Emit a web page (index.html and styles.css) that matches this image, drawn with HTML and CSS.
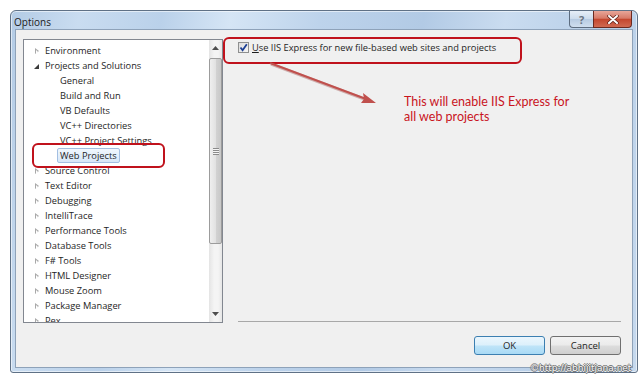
FILE: index.html
```html
<!DOCTYPE html>
<html lang="en">
<head>
    <meta charset="UTF-8">
    <meta name="viewport" content="width=device-width, initial-scale=1.0">
    <title>Options</title>
    <link rel="stylesheet" href="styles.css">
</head>
<body>
    <div class="window">
        <div class="titlebar">
            <span class="title">Options</span>
            <div class="caption-buttons">
                <span class="cap-btn help">?</span>
                <span class="cap-btn close">
                    <svg width="12" height="9" viewBox="0 0 12 9"><path d="M2 1 L10 8 M10 1 L2 8" stroke="#5a1c14" stroke-width="3.4" stroke-linecap="round"/><path d="M2 1 L10 8 M10 1 L2 8" stroke="#fff" stroke-width="2" stroke-linecap="round"/></svg>
                </span>
            </div>
        </div>

        <div class="client">
            <div class="main">
                <div class="tree">
                    <ul class="tree-list">
                        <li class="node"><span class="exp"></span><span class="label">Environment</span></li>
                        <li class="node"><span class="exp open"></span><span class="label">Projects and Solutions</span></li>
                        <li class="node child"><span class="label">General</span></li>
                        <li class="node child"><span class="label">Build and Run</span></li>
                        <li class="node child"><span class="label">VB Defaults</span></li>
                        <li class="node child"><span class="label">VC++ Directories</span></li>
                        <li class="node child"><span class="label">VC++ Project Settings</span></li>
                        <li class="node child"><span class="label selected">Web Projects</span></li>
                        <li class="node"><span class="exp"></span><span class="label">Source Control</span></li>
                        <li class="node"><span class="exp"></span><span class="label">Text Editor</span></li>
                        <li class="node"><span class="exp"></span><span class="label">Debugging</span></li>
                        <li class="node"><span class="exp"></span><span class="label">IntelliTrace</span></li>
                        <li class="node"><span class="exp"></span><span class="label">Performance Tools</span></li>
                        <li class="node"><span class="exp"></span><span class="label">Database Tools</span></li>
                        <li class="node"><span class="exp"></span><span class="label">F# Tools</span></li>
                        <li class="node"><span class="exp"></span><span class="label">HTML Designer</span></li>
                        <li class="node"><span class="exp"></span><span class="label">Mouse Zoom</span></li>
                        <li class="node"><span class="exp"></span><span class="label">Package Manager</span></li>
                        <li class="node"><span class="exp"></span><span class="label">Pex</span></li>
                    </ul>
                    <div class="scrollbar">
                        <div class="sb-arrow"><svg width="7" height="4" viewBox="0 0 7 4"><path d="M0 4 L3.5 0 L7 4 Z" fill="#4d4d4d"/></svg></div>
                        <div class="sb-thumb"><span class="grip"></span></div>
                        <div class="sb-track"></div>
                        <div class="sb-arrow"><svg width="7" height="4" viewBox="0 0 7 4"><path d="M0 0 L7 0 L3.5 4 Z" fill="#4d4d4d"/></svg></div>
                    </div>
                </div>

                <div class="panel">
                    <label class="check-row">
                        <span class="checkbox">
                            <svg width="9" height="9" viewBox="0 0 9 9"><path d="M1.5 4.5 L3.6 7.2 L7.8 1.2" fill="none" stroke="#1c3f94" stroke-width="1.8"/></svg>
                        </span>
                        <span><u>U</u>se IIS Express for new file-based web sites and projects</span>
                    </label>
                    <div class="separator"></div>
                </div>
            </div>

            <div class="buttons">
                <button class="btn default">OK</button>
                <button class="btn">Cancel</button>
            </div>
        </div>
    </div>

    <!-- annotations drawn over the screenshot -->
    <div class="callout callout-tree"></div>
    <div class="callout callout-check"></div>
    <svg class="arrow" width="640" height="377" viewBox="0 0 640 377">
        <path d="M270 63 L366 99" stroke="#8f3330" stroke-opacity=".35" stroke-width="3" transform="translate(1 1)"/>
        <path d="M270 63 L366 99" stroke="#c0504d" stroke-width="2"/>
        <path d="M376 103 L361 103 L364 99 L363 93 Z" fill="#c0504d"/>
    </svg>
    <p class="note">This will enable IIS Express for<br>all web projects</p>
    <div class="watermark">©http://abhijitjana.net</div>
</body>
</html>
```

FILE: styles.css
```css
html, body {
    margin: 0;
    padding: 0;
}
body {
    width: 640px;
    height: 377px;
    background: #fff;
    font-family: "Segoe UI", "Open Sans", sans-serif;
    font-size: 9.3px;
    color: #1e1e1e;
    position: relative;
    overflow: hidden;
}

/* window frame */
.window {
    margin: 10px 0 0 10px;
    width: 626px;
    height: 361px;
    border: 1px solid #5f7186;
    border-radius: 6px 6px 3px 3px;
    background: linear-gradient(100deg, #b3cbe5 0%, #c9dcf0 10%, #bad1ea 22%, #d5e5f5 32%, #bdd3eb 45%, #b2cae5 60%, #cadcf0 72%, #b8cfe8 86%, #c6d9ee 100%);
    box-shadow: inset 0 0 0 1px rgba(255,255,255,.55);
    display: flex;
    flex-direction: column;
}
.titlebar {
    height: 18px;
    display: flex;
    justify-content: space-between;
    align-items: flex-start;
}
.title {
    margin: 5px 0 0 3px;
    font-size: 10px;
    line-height: 12px;
    color: #1b1b1b;
}
.caption-buttons {
    display: flex;
    margin-right: 5px;
}
.cap-btn {
    height: 16px;
    display: flex;
    align-items: center;
    justify-content: center;
    border: 1px solid #5d6d80;
    border-top: none;
}
.help {
    width: 23px;
    border-right: none;
    border-radius: 0 0 0 4px;
    background: linear-gradient(#e6eef7, #cddcec 48%, #b7cbe2 52%, #cfdeee);
    color: #6a7480;
    font-size: 11px;
    font-weight: bold;
}
.close {
    width: 37px;
    border-color: #6b2a20;
    border-radius: 0 0 4px 0;
    background: linear-gradient(#e8a699, #d77a68 45%, #c4472f 52%, #d06a52);
}

/* client area */
.client {
    flex: 1;
    margin: 0 4px 4px 4px;
    border: 1px solid #8ea2b9;
    background: #f0f0f0;
    padding: 9px 11px 12px 7px;
    display: flex;
    flex-direction: column;
}
.main {
    display: flex;
    height: 284px;
}

/* tree */
.tree {
    width: 198px;
    height: 282px;
    border: 1px solid #828790;
    background: #fff;
    display: flex;
}
.tree-list {
    list-style: none;
    margin: 0;
    padding: 3px 0 0 0;
    flex: 1;
    overflow: hidden;
}
.node {
    height: 15px;
    display: flex;
    align-items: center;
    padding-left: 10px;
    white-space: nowrap;
}
.node.child {
    padding-left: 33px;
}
.exp {
    width: 8px;
    height: 15px;
    flex-shrink: 0;
    position: relative;
}
.exp::before {
    content: "";
    position: absolute;
    left: 1px;
    top: 5px;
    border-style: solid;
    border-width: 3.5px 0 3.5px 4px;
    border-color: transparent transparent transparent #a9a9a9;
}
.exp::after {
    content: "";
    position: absolute;
    left: 2px;
    top: 6.5px;
    border-style: solid;
    border-width: 2px 0 2px 2px;
    border-color: transparent transparent transparent #fff;
}
.exp.open::before {
    left: 0;
    top: 6px;
    border-width: 0 0 5px 5px;
    border-color: transparent transparent #3b3b3b transparent;
}
.exp.open::after {
    display: none;
}
.label {
    display: inline-block;
    height: 13px;
    line-height: 13px;
    padding: 0 2px;
    border: 1px solid transparent;
    border-radius: 2px;
}
.label.selected {
    border-color: #a3bfe2;
    background: linear-gradient(#f1f7fd, #d6e7f8);
}

/* scrollbar */
.scrollbar {
    width: 13px;
    display: flex;
    flex-direction: column;
    background: linear-gradient(90deg, #e4e4e4, #f4f4f4 40%, #f4f4f4 70%, #e6e6e6);
}
.sb-arrow {
    height: 16px;
    display: flex;
    align-items: center;
    justify-content: center;
}
.sb-thumb {
    height: 184px;
    margin: 2px 0 0 0;
    border: 1px solid #9c9c9c;
    border-radius: 2px;
    background: linear-gradient(90deg, #efefef, #e2e2e2 50%, #d3d3d3 52%, #c8c8c8);
    display: flex;
    align-items: center;
    justify-content: center;
}
.grip {
    width: 6px;
    height: 7px;
    background: repeating-linear-gradient(#8a8a8a 0 1px, #f4f4f4 1px 2px);
}
.sb-track {
    flex: 1;
}

/* right panel */
.panel {
    flex: 1;
    margin-left: 15px;
    display: flex;
    flex-direction: column;
}
.check-row {
    display: flex;
    align-items: center;
    height: 15px;
    margin-top: 1px;
    white-space: nowrap;
}
.checkbox {
    width: 11px;
    height: 11px;
    box-sizing: border-box;
    border: 1px solid #8e8f8f;
    background: linear-gradient(135deg, #dcdcdc, #f6f6f6);
    display: flex;
    align-items: center;
    justify-content: center;
    margin-right: 3px;
}
.separator {
    margin-top: auto;
    height: 1px;
    background: #a8a8a8;
    margin-bottom: 1px;
}

/* dialog buttons */
.buttons {
    display: flex;
    justify-content: flex-end;
    gap: 5px;
    margin-top: 13px;
}
.btn {
    width: 71px;
    height: 19px;
    padding: 0;
    font-family: inherit;
    font-size: 9.5px;
    color: #1e1e1e;
    border: 1px solid #707070;
    border-radius: 3px;
    background: linear-gradient(#f3f3f3, #ebebeb 48%, #dddddd 52%, #cfcfcf);
}
.btn.default {
    border-color: #3c7fb1;
    background: linear-gradient(#ebf6fd, #dcf0fb 48%, #bfe4f8 52%, #a9daf5);
}

/* annotations */
.callout {
    position: absolute;
    border: 2px solid #c0121c;
    border-radius: 6px;
    box-sizing: border-box;
}
.callout-tree {
    left: 32px;
    top: 143px;
    width: 133px;
    height: 25px;
}
.callout-check {
    left: 223px;
    top: 37px;
    width: 299px;
    height: 27px;
}
.arrow {
    position: absolute;
    left: 0;
    top: 0;
}
.note {
    position: absolute;
    left: 404px;
    top: 94px;
    margin: 0;
    font-family: Lato, "Open Sans", sans-serif;
    font-size: 12.5px;
    line-height: 15px;
    color: #c9141e;
}
.watermark {
    position: absolute;
    left: 530px;
    top: 363px;
    font-family: "DejaVu Sans", sans-serif;
    font-size: 9px;
    color: #f6f6f6;
    text-shadow: 1px 0 0 #6a6a6a, -1px 0 0 #6a6a6a, 0 1px 0 #6a6a6a, 0 -1px 0 #6a6a6a;
}
```
